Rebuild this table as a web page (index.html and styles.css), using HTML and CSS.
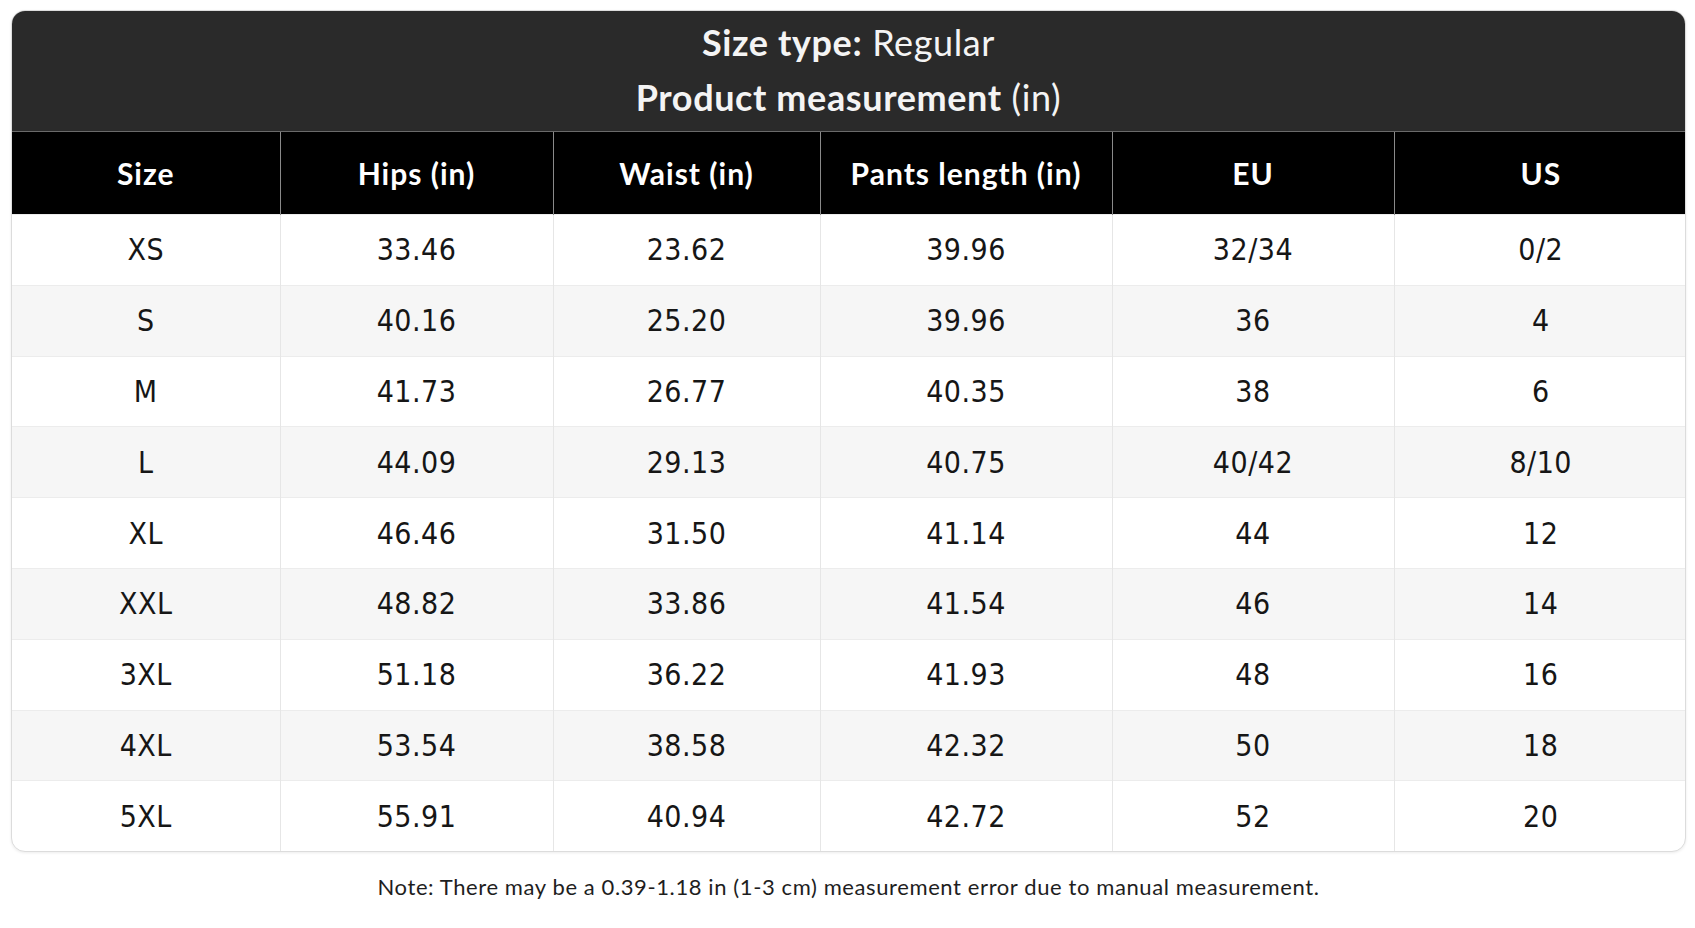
FILE: index.html
```html
<!DOCTYPE html>
<html lang="en">
<head>
<meta charset="utf-8">
<title>Size chart</title>
<link rel="stylesheet" href="styles.css">
</head>
<body>
<div class="page">
  <div class="card">
    <div class="title">
      <div class="title-line"><b>Size type:</b> Regular</div>
      <div class="title-line"><b>Product measurement</b> (in)</div>
    </div>
    <table class="chart">
      <colgroup>
        <col class="c1"><col class="c2"><col class="c3"><col class="c4"><col class="c5"><col class="c6">
      </colgroup>
      <thead>
        <tr><th>Size</th><th>Hips (in)</th><th>Waist (in)</th><th>Pants length (in)</th><th>EU</th><th>US</th></tr>
      </thead>
      <tbody>
        <tr><td>XS</td><td>33.46</td><td>23.62</td><td>39.96</td><td>32/34</td><td>0/2</td></tr>
        <tr><td>S</td><td>40.16</td><td>25.20</td><td>39.96</td><td>36</td><td>4</td></tr>
        <tr><td>M</td><td>41.73</td><td>26.77</td><td>40.35</td><td>38</td><td>6</td></tr>
        <tr><td>L</td><td>44.09</td><td>29.13</td><td>40.75</td><td>40/42</td><td>8/10</td></tr>
        <tr><td>XL</td><td>46.46</td><td>31.50</td><td>41.14</td><td>44</td><td>12</td></tr>
        <tr><td>XXL</td><td>48.82</td><td>33.86</td><td>41.54</td><td>46</td><td>14</td></tr>
        <tr><td>3XL</td><td>51.18</td><td>36.22</td><td>41.93</td><td>48</td><td>16</td></tr>
        <tr><td>4XL</td><td>53.54</td><td>38.58</td><td>42.32</td><td>50</td><td>18</td></tr>
        <tr><td>5XL</td><td>55.91</td><td>40.94</td><td>42.72</td><td>52</td><td>20</td></tr>
      </tbody>
    </table>
  </div>
  <p class="note">Note: There may be a 0.39-1.18 in (1-3 cm) measurement error due to manual measurement.</p>
</div>
</body>
</html>
```
FILE: styles.css
```css
html, body {
  margin: 0;
  padding: 0;
  background: #ffffff;
}

.page {
  padding: 10px 9px 0 11px;
  font-family: Lato, "Open Sans", sans-serif;
}

.card {
  border: 1px solid #dcdcdc;
  border-radius: 14px;
  overflow: hidden;
  box-shadow: 0 1px 3px rgba(0, 0, 0, 0.08);
  background: #fff;
}

.title {
  background: #2a2a2a;
  color: #f4f4f4;
  text-align: center;
  padding: 4px 0 6px;
}

.title-line {
  font-size: 36px;
  line-height: 55px;
  font-weight: 400;
  letter-spacing: 0.6px;
}

.title-line b {
  font-weight: 700;
}

.chart {
  width: 100%;
  border-collapse: collapse;
  table-layout: fixed;
}

.c1 { width: 268px; }
.c2 { width: 273px; }
.c3 { width: 267px; }
.c4 { width: 292px; }
.c5 { width: 282px; }
.c6 { width: 293px; }

.chart th {
  background: #000;
  color: #fff;
  font-size: 30px;
  font-weight: 700;
  letter-spacing: 1px;
  height: 82px;
  padding: 0;
  border-top: 1px solid #6a6a6a;
  border-left: 1px solid #8a8a8a;
}

.chart th:first-child,
.chart td:first-child {
  border-left: none;
}

.chart td {
  height: 69.8px;
  padding: 0;
  text-align: center;
  font-family: "Liberation Sans Narrow", "DejaVu Sans Condensed", sans-serif;
  font-size: 30px;
  letter-spacing: 0.5px;
  color: #161616;
  border-left: 1px solid #e6e6e6;
  border-top: 1px solid #ececec;
}

.chart tbody tr:nth-child(even) td {
  background: #f6f6f6;
}

.note {
  margin: 21px 0 0;
  text-align: center;
  font-size: 22px;
  letter-spacing: 0.6px;
  color: #1e1e1e;
}
```
